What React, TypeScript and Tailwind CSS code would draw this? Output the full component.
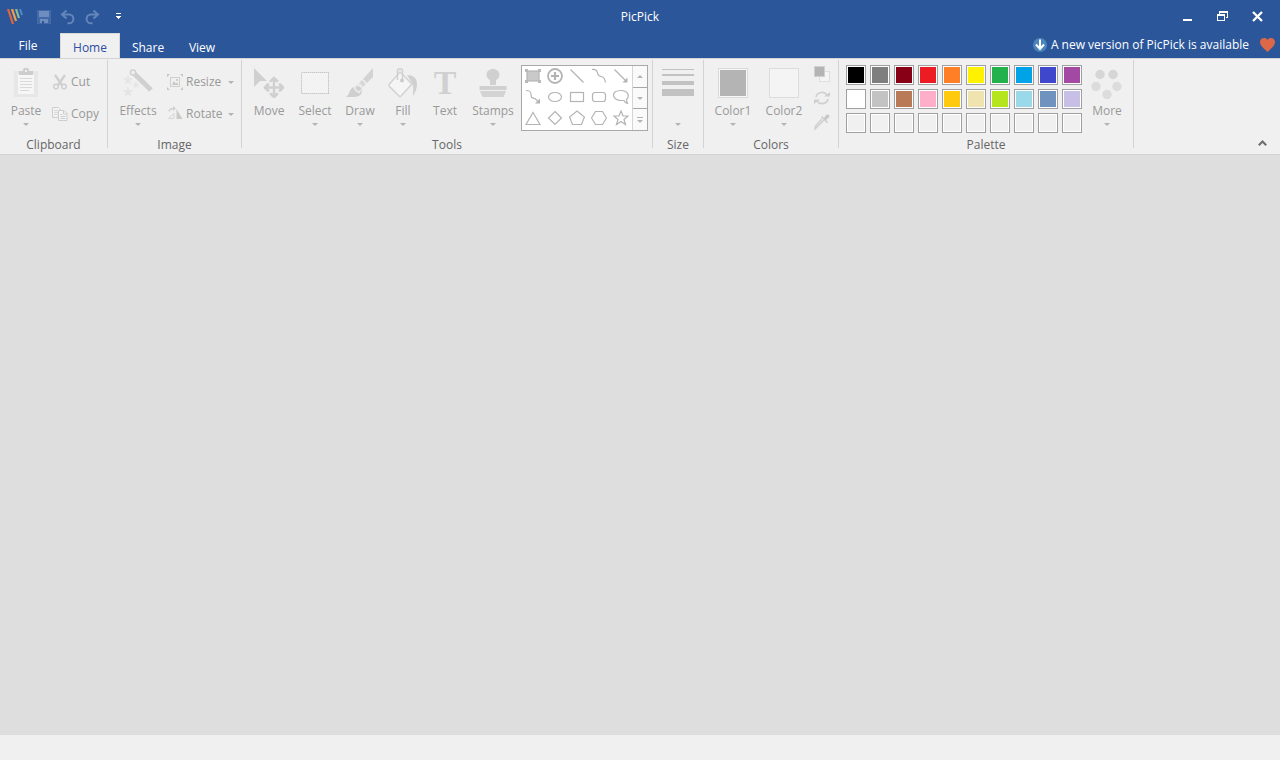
import type { ReactNode } from 'react';
import clsx from 'clsx';

interface IconProps {
  children: ReactNode;
  width?: number;
  height?: number;
  crisp?: boolean;
}

function Icon({ children, width = 16, height = 16, crisp }: IconProps) {
  return (
    <svg
      width={width}
      height={height}
      viewBox={`0 0 ${width} ${height}`}
      fill="none"
      shapeRendering={crisp ? 'crispEdges' : undefined}
      className="shrink-0"
      aria-hidden="true"
    >
      {children}
    </svg>
  );
}

function Caret({ className }: { className?: string }) {
  return (
    <svg width="6" height="3" viewBox="0 0 6 3" className={clsx('shrink-0', className)} aria-hidden="true">
      <path d="M0 0h6L3 3z" fill="#b4b4b4" />
    </svg>
  );
}

interface LargeButtonProps {
  label: string;
  icon: ReactNode;
  className: string;
  hasMenu?: boolean;
}

function LargeButton({ label, icon, className, hasMenu = true }: LargeButtonProps) {
  return (
    <button type="button" className={clsx('flex shrink-0 flex-col items-center pt-2 text-[#999]', className)}>
      <span className="flex h-8 items-center justify-center">{icon}</span>
      <span className="mt-0.5 h-[22px] leading-5">{label}</span>
      {hasMenu && <Caret />}
    </button>
  );
}

function SmallButton({ label, icon, hasMenu }: { label: string; icon: ReactNode; hasMenu?: boolean }) {
  return (
    <button type="button" className="flex h-6 w-full items-center text-[#999]">
      {icon}
      <span className="ml-[3px] leading-5">{label}</span>
      {hasMenu && <Caret className="ml-auto" />}
    </button>
  );
}

function RibbonGroup({ label, className, children }: { label: string; className: string; children: ReactNode }) {
  return (
    <>
      <section aria-label={label} className={clsx('flex shrink-0 flex-col', className)}>
        <div className="flex h-[77px]">{children}</div>
        <h2 className="text-center leading-[18px] text-[#666]">{label}</h2>
      </section>
      <div className="mt-px h-[88px] w-px shrink-0 bg-[#d3d3d3]" />
    </>
  );
}

const PasteIcon = (
  <Icon width={24} height={30}>
    <rect y="3" width="24" height="26" rx="1" fill="#e7e7e7" />
    <rect x="4" y="6" width="16" height="20" fill="#f6f6f6" />
    <path d="M5 3h4V2a2 2 0 0 1 2-2h2a2 2 0 0 1 2 2v1h4v4H5z" fill="#cdcdcd" />
    <rect x="11" y="2" width="2" height="2" fill="#f0f0f0" />
    <path d="M6 10.500h12M6 13.500h12M6 16.500h12M6 19.500h12M6 22.500h9" stroke="#d9d9d9" />
  </Icon>
);

const CutIcon = (
  <Icon>
    <path d="M3 1l7 10M13 1L6 11" stroke="#cfcfcf" strokeWidth="2.400" />
    <circle cx="4" cy="12.500" r="2.300" stroke="#cfcfcf" strokeWidth="1.500" />
    <circle cx="12" cy="12.500" r="2.300" stroke="#cfcfcf" strokeWidth="1.500" />
  </Icon>
);

const CopyIcon = (
  <Icon>
    <path d="M.5 1.500h6l2 2v8h-8z" stroke="#cecece" fill="#f2f2f2" />
    <path d="M2 4.500h4M2 6.500h4M2 8.500h4" stroke="#d9d9d9" />
    <path d="M6.500 4.500h5.500l3 3v7H6.500z" stroke="#cecece" fill="#f4f4f4" />
    <path d="M11.500 4.500v3.500h3.500M8.500 8.500h2M8.500 10.500h5M8.500 12.500h5" stroke="#cecece" />
  </Icon>
);

const STAR = 'M0 -6L1.500 -1.900L5.700 -1.900L2.400 .7L3.500 4.900L0 2.500L-3.500 4.900L-2.400 .7L-5.700 -1.900L-1.500 -1.900Z';

const EffectsIcon = (
  <Icon width={32} height={32}>
    <path d="M10 4.500L29 23" stroke="#d0d0d0" strokeWidth="5" />
    <circle cx="11" cy="5.500" r="3.300" fill="#d0d0d0" />
    <circle cx="11" cy="5.500" r="1.800" fill="#f0f0f0" />
    <path d={STAR} transform="translate(6 13) scale(.9)" fill="#e5e5e5" />
    <path d={STAR} transform="translate(14 18) scale(.7)" fill="#e5e5e5" />
    <path d={STAR} transform="translate(6 25)" fill="#e5e5e5" />
  </Icon>
);

const ResizeIcon = (
  <Icon>
    <rect x="3.500" y="3.500" width="9" height="9" stroke="#cfcfcf" />
    <path d="M5 11l2-4 2 3 1-2 1.500 3z" fill="#c6c6c6" />
    <path d="M0 0h3L0 3zM16 0h-3l3 3zM0 16h3l-3-3zM16 16h-3l3-3z" fill="#c6c6c6" />
    <rect x="9" y="5" width="2" height="2" fill="#cfcfcf" />
  </Icon>
);

const RotateIcon = (
  <Icon>
    <path d="M9.500 3L15.500 13H9.500z" fill="#cbcbcb" />
    <path d="M7 7.500V12.500H1.500z" stroke="#d7d7d7" />
    <path d="M2 5.500C2.500 3 4 2.500 6.500 2.500" stroke="#d0d0d0" strokeWidth="1.500" />
    <path d="M6 0l3 2.500L6 5z" fill="#d0d0d0" />
  </Icon>
);

const MoveIcon = (
  <Icon width={30} height={30}>
    <path d="M0 0L13 13L6 13L0 19z" fill="#d0d0d0" />
    <path d="M20 11v17M11 19.500h18" stroke="#d0d0d0" strokeWidth="2.500" />
    <path
      d="M17 13l3-3 3 3M17 26l3 3 3-3M14 16.500l-3 3 3 3M26 16.500l3 3-3 3"
      stroke="#d0d0d0"
      strokeWidth="2.800"
      strokeLinecap="round"
      strokeLinejoin="round"
      fill="#d0d0d0"
    />
  </Icon>
);

const SelectIcon = (
  <Icon width={28} height={22} crisp>
    <rect x=".5" y=".5" width="27" height="21" fill="#f3f3f3" stroke="#dedede" />
    <rect x=".5" y=".5" width="27" height="21" stroke="#c6c6c6" strokeDasharray="1 1" />
  </Icon>
);

const DrawIcon = (
  <Icon width={28} height={30}>
    <path d="M27 0v9l-6 6-4-4z" fill="#d3d3d3" />
    <path d="M16 12l4 4-3 3-4-4z" fill="#d8d8d8" />
    <path d="M0 29c3-2 3-5 5-8 3-4 9-4 11 0 1 5-3 8-8 8z" fill="#cfcfcf" />
    <path d="M8 18c0 3 3 6 6 6.500" stroke="#f0f0f0" strokeWidth="1.500" />
    <circle cx="12.500" cy="20" r="3.500" stroke="#e8e8e8" strokeWidth="1.500" />
  </Icon>
);

const FillIcon = (
  <Icon width={30} height={30}>
    <path d="M12 4L24 16L13 28Q12 29 11 28L1.500 18.500Q.5 17 1.500 16z" fill="#f5f5f5" stroke="#d2d2d2" strokeWidth="1.500" />
    <path d="M9.500 12V3a2 2 0 0 1 2-2h1a2 2 0 0 1 2 2v9" stroke="#cfcfcf" strokeWidth="1.400" />
    <circle cx="14" cy="12.500" r="2" fill="#cbcbcb" />
    <path d="M19 7c6 0 10 3 10 9 0 5-2 9-4 12 0-5 1-9-1-13z" fill="#d0d0d0" />
  </Icon>
);

const StampIcon = (
  <Icon width={28} height={30}>
    <path d="M14 1c4 0 6.500 2.500 6.500 5.500S19 11 17 12v5h-6v-5c-2-1-3.500-2.500-3.500-5.500S10 1 14 1z" fill="#d0d0d0" />
    <path d="M.5 18h27v4H.5z" fill="#d0d0d0" />
    <path d="M1 23h26l-2.500 6h-21z" fill="#d3d3d3" />
  </Icon>
);

const MoreIcon = (
  <Icon width={32} height={32}>
    <circle cx="9" cy="7.500" r="4.700" fill="#d6d6d6" />
    <circle cx="22" cy="7.500" r="4.700" fill="#d6d6d6" />
    <circle cx="5" cy="19.500" r="4.700" fill="#dcdcdc" />
    <circle cx="26" cy="19.500" r="4.700" fill="#dcdcdc" />
    <circle cx="16" cy="27.500" r="4.700" fill="#dcdcdc" />
  </Icon>
);

const SHAPES: { name: string; drawing: ReactNode }[] = [
  {
    name: 'Selection',
    drawing: (
      <>
        <rect x="2" y="3" width="12" height="10" fill="#c9c9c9" />
        <path d="M0 1h3v3H0zM13 1h3v3h-3zM0 12h3v3H0zM13 12h3v3h-3z" fill="#b9b9b9" stroke="none" />
      </>
    ),
  },
  {
    name: 'Magnify',
    drawing: (
      <>
        <circle cx="8" cy="8" r="7" strokeWidth="1.800" />
        <path d="M8 4v8M4 8h8" strokeWidth="2.200" />
      </>
    ),
  },
  { name: 'Line', drawing: <path d="M1.500 1.500l13 13" /> },
  { name: 'Curve', drawing: <path d="M1 1.500c4-.5 5 1 5.500 3.500s1 3 3.500 3.500 4 2 4.500 6" /> },
  {
    name: 'Arrow',
    drawing: (
      <>
        <path d="M1.500 1.500l12 12" />
        <path d="M14.500 9.500v5h-5z" fill="#b4b4b4" stroke="none" />
      </>
    ),
  },
  {
    name: 'Curved arrow',
    drawing: (
      <>
        <path d="M1 1.500c4 0 5 1 5 4s1 3.500 4 4l3.500 3.500" />
        <path d="M15 9.500v5h-5z" fill="#b4b4b4" stroke="none" />
      </>
    ),
  },
  { name: 'Ellipse', drawing: <ellipse cx="8" cy="8" rx="6.500" ry="4.500" /> },
  { name: 'Rectangle', drawing: <rect x="1.500" y="3.500" width="13" height="9" /> },
  { name: 'Rounded rectangle', drawing: <rect x="1.500" y="3.500" width="13" height="9" rx="2.500" /> },
  { name: 'Balloon', drawing: <path d="M11 11.500Q12 14 14.500 14.500Q13.500 12.500 13.500 10.500C17.500 6 14 1.500 8 1.500S.5 4 .5 6.500 4 11.500 8 11.500z" /> },
  { name: 'Triangle', drawing: <path d="M8 2.500l7 12H1z" /> },
  { name: 'Diamond', drawing: <path d="M8 1.500L14.500 8L8 14.500L1.500 8z" /> },
  { name: 'Pentagon', drawing: <path d="M8 1L15.500 7L12.500 14.500H3.500L.5 7z" /> },
  { name: 'Hexagon', drawing: <path d="M4.500 1.500h7L15.500 8l-4 6.500h-7L.5 8z" /> },
  { name: 'Star', drawing: <path d="M8 1l2 5h5l-4 3.500 1.500 5L8 11.500l-4.500 3 1.500-5L1 6h5z" /> },
];

function ShapeGallery() {
  return (
    <div className="mt-1.5 ml-px flex h-[66px] w-[127px] shrink-0 border border-[#a9a9a9] bg-white">
      <div className="grid w-[110px] grid-cols-5 content-start">
        {SHAPES.map((shape) => (
          <button
            key={shape.name}
            type="button"
            aria-label={shape.name}
            className="flex h-[21px] items-start justify-center pt-0.5"
          >
            <svg width="16" height="16" viewBox="0 0 16 16" fill="none" stroke="#b4b4b4" strokeWidth="1.200" aria-hidden="true">
              {shape.drawing}
            </svg>
          </button>
        ))}
      </div>
      <div className="flex flex-1 flex-col divide-y divide-[#a9a9a9] border-l border-[#d5d5d5] bg-[#fafafa]">
        <button type="button" aria-label="Previous shapes" className="flex flex-1 items-center justify-center">
          <Caret className="rotate-180" />
        </button>
        <button type="button" aria-label="Next shapes" className="flex flex-1 items-center justify-center">
          <Caret />
        </button>
        <button type="button" aria-label="All shapes" className="flex flex-1 items-center justify-center">
          <Icon width={6} height={6}>
            <path d="M0 .5h6" stroke="#b4b4b4" />
            <path d="M0 3h6l-3 3z" fill="#b4b4b4" />
          </Icon>
        </button>
      </div>
    </div>
  );
}

const PALETTE = [
  ['Black', 'bg-[#000000]'],
  ['Gray', 'bg-[#7f7f7f]'],
  ['Dark red', 'bg-[#880015]'],
  ['Red', 'bg-[#ed1c24]'],
  ['Orange', 'bg-[#ff7f27]'],
  ['Yellow', 'bg-[#fff200]'],
  ['Green', 'bg-[#22b14c]'],
  ['Turquoise', 'bg-[#00a2e8]'],
  ['Indigo', 'bg-[#3f48cc]'],
  ['Purple', 'bg-[#a349a4]'],
  ['White', 'bg-[#ffffff]'],
  ['Light gray', 'bg-[#c3c3c3]'],
  ['Brown', 'bg-[#b97a57]'],
  ['Rose', 'bg-[#ffaec9]'],
  ['Gold', 'bg-[#ffc90e]'],
  ['Light yellow', 'bg-[#efe4b0]'],
  ['Lime', 'bg-[#b5e61d]'],
  ['Light turquoise', 'bg-[#99d9ea]'],
  ['Blue gray', 'bg-[#7092be]'],
  ['Lavender', 'bg-[#c8bfe7]'],
  ...Array.from({ length: 10 }, (_, i) => [`Custom color ${i + 1}`, 'bg-[#f0f0f0]']),
];

function TitleBar() {
  return (
    <div className="grid h-[33px] grid-cols-[1fr_auto_1fr] items-center">
      <div className="flex items-center pl-[7px]">
        <Icon>
          <path d="M1 0L6 15" stroke="#e2633f" strokeWidth="2.200" />
          <path d="M5 0L9 12" stroke="#eda04c" strokeWidth="2.200" />
          <path d="M9 0L12 9" stroke="#8fbb92" strokeWidth="2.200" />
          <path d="M13 0l2 6" stroke="#4d8cc4" strokeWidth="2" />
        </Icon>
        <div className="ml-[13px] flex items-center gap-2">
          <button type="button" aria-label="Save" className="flex w-4 justify-center">
            <Icon width={14} height={14} crisp>
              <path d="M0 0h14v14H0z" fill="#416aa6" />
              <path d="M2 1h10v6H2zM3 9h8v4H3z" fill="#6d8ebf" />
              <path d="M5 11h2v3H5z" fill="#2b579a" />
            </Icon>
          </button>
          <button type="button" aria-label="Undo" className="flex w-4 justify-center">
            <Icon>
              <path d="M6.500 1.500L2 5.500l4.500 4M2 5.500h7a4.300 4.300 0 0 1 0 8.800H7.500" stroke="#6385b9" strokeWidth="2" />
            </Icon>
          </button>
          <button type="button" aria-label="Redo" className="flex w-4 justify-center">
            <Icon>
              <path d="M9.500 1.500L14 5.500l-4.500 4M14 5.500H7a4.300 4.300 0 0 0 0 8.800h1.500" stroke="#6385b9" strokeWidth="2" />
            </Icon>
          </button>
        </div>
        <button type="button" aria-label="Customize quick access toolbar" className="ml-[15px]">
          <Icon width={7} height={7} crisp>
            <path d="M1 0h5v1H1zM1 3h5v1H1zM2 4h3v1H2zM3 5h1v1H3z" fill="#fff" />
          </Icon>
        </button>
      </div>
      <h1 className="leading-5">PicPick</h1>
      <div className="flex h-full items-center justify-end pr-[5px]">
        <button type="button" aria-label="Minimize" className="flex w-[35px] justify-center">
          <Icon width={11} height={11} crisp>
            <path d="M1 8h9v2H1z" fill="#fff" />
          </Icon>
        </button>
        <button type="button" aria-label="Restore" className="flex w-[35px] justify-center">
          <Icon width={11} height={11} crisp>
            <path d="M2 0h9v7H9V6h1V2H3v1H2zM0 3h8v7H0zM1 5v4h6V5z" fill="#fff" fillRule="evenodd" />
          </Icon>
        </button>
        <button type="button" aria-label="Close" className="flex w-[35px] justify-center">
          <Icon width={11} height={11}>
            <path d="M1 1l9 9M10 1l-9 9" stroke="#fff" strokeWidth="2.300" />
          </Icon>
        </button>
      </div>
    </div>
  );
}

function TabBar() {
  return (
    <div className="flex h-[25px]">
      <nav aria-label="Ribbon tabs" className="flex">
        <button type="button" className="w-14 leading-5">
          File
        </button>
        <button
          type="button"
          className="ml-1 w-[60px] border border-b-0 border-[#d9d9d9] bg-[#f0f0f0] pt-1 leading-5 text-[#2b4fa2]"
        >
          Home
        </button>
        <button type="button" className="w-14 pt-1 leading-5">
          Share
        </button>
        <button type="button" className="w-[52px] pt-1 leading-5">
          View
        </button>
      </nav>
      <div className="ml-auto flex items-center gap-[11px] pr-[5px] pb-0.5">
        <a href="#update" className="flex items-center gap-1">
          <Icon width={14} height={14}>
            <circle cx="7" cy="7" r="7" fill="#4a86bd" />
            <path d="M7 1.500v9M3 6.500l4 4.500 4-4.500" stroke="#fff" strokeWidth="2" />
          </Icon>
          <span className="leading-5">A new version of PicPick is available</span>
        </a>
        <button type="button" aria-label="Donate">
          <Icon width={15} height={14}>
            <path d="M7.500 14C5 11 0 8.500 0 4 0 0 5.500-1.500 7.500 2 9.500-1.500 15 0 15 4c0 4.500-5 7-7.500 10z" fill="#dc6847" />
          </Icon>
        </button>
      </div>
    </div>
  );
}

function Ribbon() {
  return (
    <div className="flex border-y border-[#d3d3d3] bg-[#f0f0f0]">
      <RibbonGroup label="Clipboard" className="w-[107px]">
        <LargeButton label="Paste" icon={PasteIcon} className="ml-1.5 w-10" />
        <div className="ml-1.5 flex w-[50px] flex-col gap-2 pt-[11px]">
          <SmallButton label="Cut" icon={CutIcon} />
          <SmallButton label="Copy" icon={CopyIcon} />
        </div>
      </RibbonGroup>
      <RibbonGroup label="Image" className="w-[133px]">
        <LargeButton label="Effects" icon={EffectsIcon} className="ml-1.5 w-12" />
        <div className="ml-[5px] flex w-[67px] flex-col gap-2 pt-[11px]">
          <SmallButton label="Resize" icon={ResizeIcon} hasMenu />
          <SmallButton label="Rotate" icon={RotateIcon} hasMenu />
        </div>
      </RibbonGroup>
      <RibbonGroup label="Tools" className="w-[410px]">
        <LargeButton label="Move" icon={MoveIcon} className="ml-1 w-[46px]" hasMenu={false} />
        <LargeButton label="Select" icon={SelectIcon} className="w-[46px]" />
        <LargeButton label="Draw" icon={DrawIcon} className="w-11" />
        <LargeButton label="Fill" icon={FillIcon} className="w-[42px]" />
        <LargeButton
          label="Text"
          icon={<span className="font-['Liberation_Serif',serif] text-[34px] leading-8 font-bold text-[#d0d0d0]">T</span>}
          className="w-[42px]"
          hasMenu={false}
        />
        <LargeButton label="Stamps" icon={StampIcon} className="w-[54px]" />
        <ShapeGallery />
      </RibbonGroup>
      <RibbonGroup label="Size" className="w-[50px]">
        <button type="button" aria-label="Line size" className="flex w-full flex-col items-center pt-2.5">
          <Icon width={32} height={54} crisp>
            <path d="M0 0h32v1H0zM0 5h32v2H0zM0 12h32v4H0zM0 20h32v7H0z" fill="#c2c2c2" />
          </Icon>
          <Caret />
        </button>
      </RibbonGroup>
      <RibbonGroup label="Colors" className="w-[134px]">
        <LargeButton
          label="Color1"
          icon={<span className="size-[30px] border border-[#d9d9d9] bg-[#b4b4b4] shadow-[inset_0_0_0_1px_#f8f8f8]" />}
          className="ml-1 w-[50px]"
        />
        <LargeButton
          label="Color2"
          icon={<span className="size-[30px] border border-[#dcdcdc] bg-[#f4f4f4]" />}
          className="w-[52px]"
        />
        <div className="ml-1 flex w-4 flex-col gap-2 pt-[7px]">
          <button type="button" aria-label="Default colors">
            <Icon crisp>
              <path d="M5.500 5.500h10v10h-10z" stroke="#dedede" fill="#f5f5f5" />
              <path d="M.5.500h10v10H.5z" stroke="#d0d0d0" fill="#b4b4b4" />
            </Icon>
          </button>
          <button type="button" aria-label="Swap colors">
            <Icon>
              <path d="M2 7a6 5.500 0 0 1 11-2M14 9a6 5.500 0 0 1-11 2" stroke="#cfcfcf" strokeWidth="1.600" />
              <path d="M10 6.500h6V2zM6 9.500H0V14z" fill="#cfcfcf" />
            </Icon>
          </button>
          <button type="button" aria-label="Pick color">
            <Icon>
              <path d="M10 6L3 13l-2 2 .500-3L8 5" stroke="#cfcfcf" strokeWidth="1.500" />
              <path d="M7 3l6 6 1-1-2-2 3-2.500C16.500 1 14-.5 12 1L10 4 8 2z" fill="#c9c9c9" />
            </Icon>
          </button>
        </div>
      </RibbonGroup>
      <RibbonGroup label="Palette" className="w-[294px]">
        <div className="mt-1.5 ml-[7px] grid grid-cols-10 content-start gap-1">
          {PALETTE.map(([name, color]) => (
            <button
              key={name}
              type="button"
              aria-label={name}
              className={clsx('size-5 border border-[#a0a0a0] shadow-[inset_0_0_0_1px_#fff]', color)}
            />
          ))}
        </div>
        <LargeButton label="More" icon={MoreIcon} className="ml-0.5 w-[46px]" />
      </RibbonGroup>
      <button type="button" aria-label="Collapse the ribbon" className="mt-auto mr-[13px] mb-2 ml-auto">
        <Icon width={9} height={6}>
          <path d="M.8 5.200l3.700-3.700 3.700 3.700" stroke="#6d6d6d" strokeWidth="2" />
        </Icon>
      </button>
    </div>
  );
}

export default function App() {
  return (
    <div className="flex min-h-screen flex-col bg-[#dedede] font-['Open_Sans',sans-serif] text-[12px]">
      <header className="bg-[#2b579a] text-white">
        <TitleBar />
        <TabBar />
      </header>
      <Ribbon />
      <main className="flex-1" />
      <footer className="h-[25px] bg-[#f0f0f0]" />
    </div>
  );
}
